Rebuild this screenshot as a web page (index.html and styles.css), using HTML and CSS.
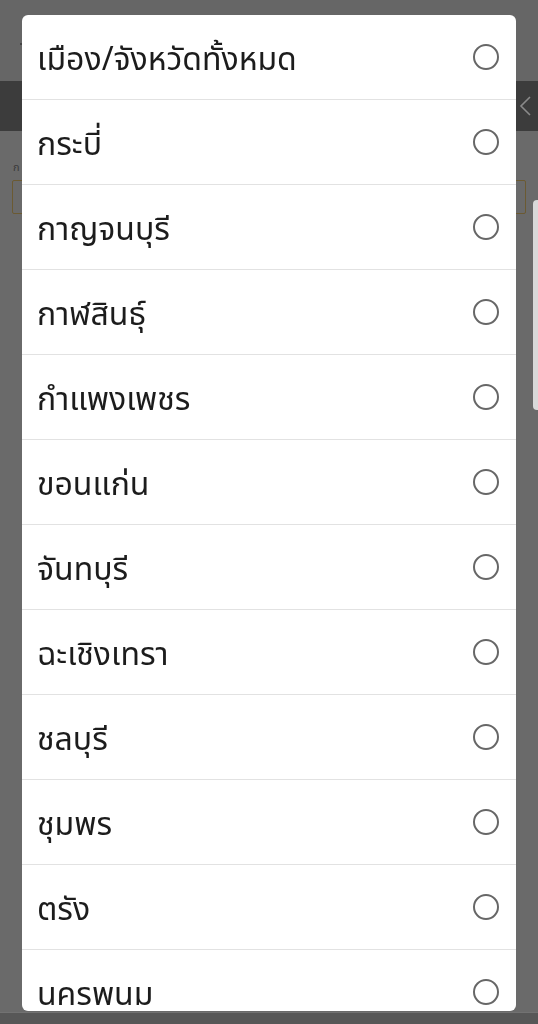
FILE: index.html
```html
<!DOCTYPE html>
<html lang="th">
<head>
  <meta charset="UTF-8">
  <meta name="viewport" content="width=device-width, initial-scale=1.0">
  <title>เลือกจังหวัด</title>
  <link rel="stylesheet" href="styles.css">
</head>
<body>
  <div class="page">
    <div class="top-area"><span class="top-mark"></span></div>
    <div class="toolbar">
      <svg class="chevron" width="14" height="22" viewBox="0 0 14 22">
        <path d="M12 2 L3 11 L12 20" fill="none" stroke="#8a8a8a" stroke-width="1.6"/>
      </svg>
    </div>
    <div class="form">
      <div class="field-label">ก</div>
      <div class="field-input"></div>
    </div>
    <div class="side-panel"></div>
    <div class="bottom-bar"></div>
  </div>

  <div class="dialog">
    <ul class="option-list">
      <li class="option"><span class="option-text">เมือง/จังหวัดทั้งหมด</span><span class="radio"></span></li>
      <li class="option"><span class="option-text">กระบี่</span><span class="radio"></span></li>
      <li class="option"><span class="option-text">กาญจนบุรี</span><span class="radio"></span></li>
      <li class="option"><span class="option-text">กาฬสินธุ์</span><span class="radio"></span></li>
      <li class="option"><span class="option-text">กำแพงเพชร</span><span class="radio"></span></li>
      <li class="option"><span class="option-text">ขอนแก่น</span><span class="radio"></span></li>
      <li class="option"><span class="option-text">จันทบุรี</span><span class="radio"></span></li>
      <li class="option"><span class="option-text">ฉะเชิงเทรา</span><span class="radio"></span></li>
      <li class="option"><span class="option-text">ชลบุรี</span><span class="radio"></span></li>
      <li class="option"><span class="option-text">ชุมพร</span><span class="radio"></span></li>
      <li class="option"><span class="option-text">ตรัง</span><span class="radio"></span></li>
      <li class="option"><span class="option-text">นครพนม</span><span class="radio"></span></li>
    </ul>
  </div>
</body>
</html>
```

FILE: styles.css
```css
body, html {
  margin: 0;
  padding: 0;
  height: 100%;
  overflow: hidden;
  font-family: "Noto Sans Thai", "Noto Sans", "DejaVu Sans", sans-serif;
  background-color: #6a6a6a;
}

.page {
  position: relative;
  height: 100%;
}

.top-area {
  height: 81px;
  background-color: #666;
  position: relative;
}

.top-mark {
  position: absolute;
  left: 20px;
  top: 43px;
  width: 3px;
  height: 2px;
  background-color: #444;
}

.toolbar {
  height: 50px;
  background-color: #3c3c3c;
  display: flex;
  justify-content: flex-end;
  align-items: center;
  padding-right: 6px;
}

.form {
  padding: 30px 12px 0 12px;
}

.field-label {
  font-size: 11px;
  line-height: 14px;
  color: #3a3a3a;
  height: 14px;
  margin-left: 1px;
}

.field-input {
  margin-top: 5px;
  height: 32px;
  border: 1.5px solid #6b5a32;
  border-radius: 2px;
}

.side-panel {
  position: absolute;
  left: 533px;
  top: 200px;
  width: 20px;
  height: 210px;
  border-radius: 4px;
  background-color: #d9d9d9;
}

.bottom-bar {
  position: absolute;
  left: 0;
  right: 0;
  bottom: 0;
  height: 11px;
  background-color: #575757;
  border-top: 1px solid #727272;
}

.dialog {
  position: fixed;
  top: 15px;
  left: 22px;
  width: 494px;
  height: 996px;
  background-color: #fff;
  border-radius: 6px;
  overflow: hidden;
}

.option-list {
  list-style: none;
  margin: 0;
  padding: 0;
}

.option {
  height: 84px;
  border-bottom: 1px solid #e2e2e2;
  display: flex;
  align-items: center;
  justify-content: space-between;
  padding: 0 17px 0 15px;
}

.option-text {
  font-size: 32px;
  line-height: 44px;
  color: #1c1c1c;
  padding-top: 6px;
}

.radio {
  width: 22px;
  height: 22px;
  border: 2px solid #676767;
  border-radius: 50%;
}
```
